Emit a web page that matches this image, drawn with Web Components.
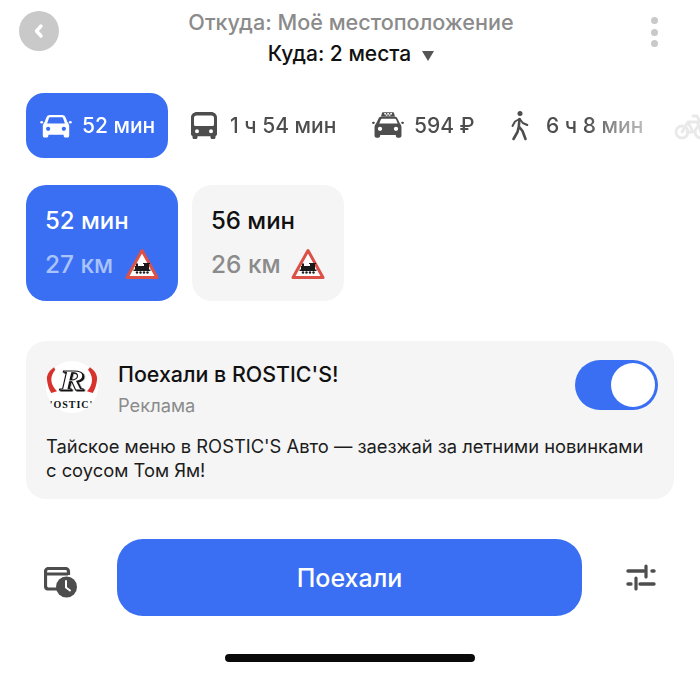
<!DOCTYPE html>
<html lang="ru">
<head>
<meta charset="utf-8">
<title>Маршрут</title>
<style>
  html, body { margin: 0; padding: 0; background: #fff; }
  body { font-family: Inter, "Noto Sans", sans-serif; }
</style>
</head>
<body>
<route-screen></route-screen>
<script>
const ICONS = {
  car: `<svg width="34" height="24" viewBox="0 0 34 26"><path fill="currentColor" fill-rule="evenodd" d="M10.500 1h13c1.800 0 3.100.9 3.800 2.500l2.200 5.500c1.200 1.300 1.800 2.700 1.800 4.300v10.200c0 1.100-.8 2-1.900 2h-2.200c-1.100 0-1.900-.9-1.900-2v-1H8.700v1c0 1.100-.8 2-1.900 2H4.600c-1.100 0-1.900-.9-1.900-2V13.300c0-1.600.6-3 1.800-4.300l2.200-5.500C7.400 1.900 8.700 1 10.500 1zm.6 2.600c-.9 0-1.600.5-1.900 1.300L7.400 10.300h19.200l-1.800-5.400c-.3-.8-1-1.300-1.900-1.300zM8.500 13.700a2.300 2.300 0 1 0 0 4.600 2.300 2.300 0 0 0 0-4.600zm17 0a2.300 2.300 0 1 0 0 4.600 2.300 2.300 0 0 0 0-4.600z"/><rect fill="currentColor" y="7.500" width="3" height="2.800" rx="1.400"/><rect fill="currentColor" x="31" y="7.500" width="3" height="2.800" rx="1.400"/></svg>`,
  bus: `<svg width="26" height="27" viewBox="0 0 26 27"><path fill="currentColor" fill-rule="evenodd" d="M6 0h14c3.400 0 6 2.400 6 5.500V22c0 1-.6 1.800-1.500 2.100V25.500c0 .8-.7 1.500-1.500 1.500h-2c-.8 0-1.500-.7-1.500-1.500V24.200H6.500v1.300c0 .8-.7 1.500-1.500 1.500H3c-.8 0-1.500-.7-1.500-1.500v-1.400C.6 23.800 0 23 0 22V5.500C0 2.400 2.600 0 6 0zM5.500 3.500C4 3.500 3 4.500 3 6v6.500c0 .8.600 1.500 1.500 1.500h17c.9 0 1.500-.7 1.500-1.500V6c0-1.500-1-2.500-2.500-2.500zM6 17.200a2 2 0 1 0 0 4 2 2 0 0 0 0-4zm14 0a2 2 0 1 0 0 4 2 2 0 0 0 0-4z"/></svg>`,
  taxi: `<svg width="32" height="27" viewBox="0 0 34 28"><path fill="currentColor" d="M11 0h12l1.500 4.500h-15z"/><path fill="#fff" d="M13 .8h1.800v1.400H13zM16.200.8H18v1.400h-1.800zM19.400.8h1.800v1.400h-1.800zM14.600 2.300h1.800v1.400h-1.800zM17.800 2.300h1.800v1.400h-1.800z"/><path fill="currentColor" fill-rule="evenodd" d="M10.500 4.500h13c1.800 0 3.100.9 3.800 2.500l2.200 4.500c1.200 1.300 1.800 2.700 1.800 4.300v9.200c0 1.100-.8 2-1.900 2h-2.200c-1.100 0-1.900-.9-1.900-2v-1H8.700v1c0 1.100-.8 2-1.900 2H4.600c-1.100 0-1.900-.9-1.900-2v-9.200c0-1.600.6-3 1.800-4.300l2.200-4.500c.7-1.600 2-2.500 3.800-2.500zm.6 2.300c-.9 0-1.600.5-1.900 1.300l-1.500 3.700h19.600l-1.500-3.700c-.3-.8-1-1.300-1.900-1.300zM8.500 15.200a2.300 2.300 0 1 0 0 4.600 2.300 2.300 0 0 0 0-4.600zm17 0a2.300 2.300 0 1 0 0 4.600 2.300 2.300 0 0 0 0-4.600z"/><rect fill="currentColor" y="10" width="3" height="2.400" rx="1.200"/><rect fill="currentColor" x="31" y="10" width="3" height="2.400" rx="1.200"/></svg>`,
  walk: `<svg width="18" height="30" viewBox="0 0 18 30"><circle fill="currentColor" cx="9" cy="2.500" r="2.500"/><path fill="none" stroke="currentColor" stroke-width="2.600" stroke-linecap="round" stroke-linejoin="round" d="M8.500 8 7.800 15.500 11.500 20 14.500 28M7.800 15.500 6.500 21 2.500 28"/><path fill="none" stroke="currentColor" stroke-width="2" stroke-linecap="round" stroke-linejoin="round" d="M8.500 8 4 10.500 1.500 15M8.800 8l3 4 4.500 2"/></svg>`,
  bike: `<svg width="34" height="28" viewBox="0 0 34 28"><g fill="none" stroke="currentColor" stroke-width="2.800" stroke-linecap="round" stroke-linejoin="round"><circle cx="8" cy="20" r="6"/><circle cx="27" cy="20" r="6"/><path d="M8 20 14 10h9l4 10M14 10l5 10h-6M19 4h4l3 6"/></g></svg>`,
  history: `<svg width="33" height="31" viewBox="0 0 33 31"><path fill="none" stroke="currentColor" stroke-width="3.200" stroke-linejoin="round" d="M14 22H4.500c-1.700 0-3-1.200-3-3V4.500c0-1.700 1.300-3 3-3h17c1.700 0 3 1.300 3 3V8M2 7h22"/><circle fill="currentColor" cx="22.500" cy="20" r="10.500"/><path fill="none" stroke="#fff" stroke-width="2" stroke-linecap="round" stroke-linejoin="round" d="M22 14v6.500l4 3"/></svg>`,
  sliders: `<svg width="30" height="27" viewBox="0 0 30 27"><g fill="none" stroke="currentColor" stroke-linecap="round"><path stroke-width="3.400" d="M2 7h16M28 7h-2M2 20h3M14 20h14"/><path stroke-width="3.200" d="M20 2v11M10 14v11"/></g></svg>`
}

// Знак "железнодорожный переезд"
const RAIL_SIGN = `<svg width="34" height="32" viewBox="0 0 34 32">
  <path fill="#fff" stroke="#dc5147" stroke-width="3" stroke-linejoin="round" d="M17 2.500 32 29.500H2z"/>
  <path fill="#1a1a1a" d="M11 15.500h2v2.500h6v-2h-1v-1h7v1h-1v5.500h1.500v1.500H8.500v-1.500H10v-3.500h1z"/>
  <circle fill="#1a1a1a" cx="12" cy="24.500" r="1.200"/><circle fill="#1a1a1a" cx="15.500" cy="24.500" r="1.200"/>
  <circle fill="#1a1a1a" cx="19" cy="24.500" r="1.200"/><circle fill="#1a1a1a" cx="22.500" cy="24.500" r="1.200"/>
</svg>`

class RouteHeader extends HTMLElement {
  constructor () {
    super()
    this.shadow = this.attachShadow({ mode: 'open' })
  }

  connectedCallback () {
    this.shadow.innerHTML =
      /* html */`
      <style>
        :host {
          display: grid;
          grid-template-columns: 66px 1fr 66px;
          height: 93px;
          padding: 0 13px 0 19px;
          box-sizing: border-box;
        }
        .back {
          width: 40px;
          height: 40px;
          margin-top: 11px;
          border-radius: 50%;
          background: #c9c9c9;
          display: flex;
          align-items: center;
          justify-content: center;
        }
        .titles {
          text-align: center;
          padding-top: 8px;
          margin-left: -4px;
        }
        .from {
          color: #8b8b8b;
          font-size: 21.600px;
          font-weight: 500;
          line-height: 28px;
          white-space: nowrap;
        }
        .to {
          color: #111;
          font-size: 21px;
          font-weight: 500;
          line-height: 28px;
          margin-top: 4px;
          display: flex;
          justify-content: center;
          align-items: center;
          gap: 11px;
        }
        .arrow {
          width: 0;
          height: 0;
          margin-top: 3px;
          border-left: 6px solid transparent;
          border-right: 6px solid transparent;
          border-top: 10px solid #555;
        }
        .dots {
          justify-self: end;
          margin: 17px 29px 0 0;
          display: flex;
          flex-direction: column;
          gap: 4.500px;
        }
        .dots i {
          width: 7px;
          height: 7px;
          border-radius: 50%;
          background: #c9c9c9;
        }
      </style>
      <div class="back">
        <svg width="14" height="16" viewBox="0 0 14 16"><path fill="none" stroke="#fff" stroke-width="3.400" stroke-linecap="round" stroke-linejoin="round" d="M9 3 4.500 8 9 13"/></svg>
      </div>
      <div class="titles">
        <div class="from">Откуда: Моё местоположение</div>
        <div class="to"><span>Куда: 2 места</span><span class="arrow"></span></div>
      </div>
      <div class="dots"><i></i><i></i><i></i></div>
      `
  }
}

class TransportTab extends HTMLElement {
  constructor () {
    super()
    this.shadow = this.attachShadow({ mode: 'open' })
  }

  connectedCallback () {
    const icon = ICONS[this.getAttribute('icon')]
    this.shadow.innerHTML =
      /* html */`
      <style>
        :host {
          display: flex;
          flex: none;
          align-items: center;
          height: 65px;
          box-sizing: border-box;
          border-radius: 18px;
          color: #4d4d4d;
          font-size: 21px;
          font-weight: 500;
          white-space: nowrap;
        }
        :host([active]) {
          background: #3a6ff3;
          color: #fff;
        }
        .icon { display: flex; }
      </style>
      <span class="icon">${icon}</span>
      <slot></slot>
      `
  }
}

class TransportTabs extends HTMLElement {
  constructor () {
    super()
    this.shadow = this.attachShadow({ mode: 'open' })
  }

  connectedCallback () {
    this.shadow.innerHTML =
      /* html */`
      <style>
        :host {
          display: flex;
          height: 65px;
          overflow: hidden;
          padding-left: 26px;
          -webkit-mask-image: linear-gradient(to right, #000 585px, rgba(0,0,0,.7) 610px, rgba(0,0,0,.4) 641px, rgba(0,0,0,.12) 675px);
          mask-image: linear-gradient(to right, #000 585px, rgba(0,0,0,.7) 610px, rgba(0,0,0,.4) 641px, rgba(0,0,0,.12) 675px);
        }
      </style>
      <slot></slot>
      `
  }
}

class RouteCard extends HTMLElement {
  constructor () {
    super()
    this.shadow = this.attachShadow({ mode: 'open' })
  }

  connectedCallback () {
    this.shadow.innerHTML =
      /* html */`
      <style>
        :host {
          display: flex;
          flex-direction: column;
          width: 152px;
          height: 116px;
          box-sizing: border-box;
          padding: 22px 0 0 19px;
          border-radius: 20px;
          background: #f5f5f5;
          color: #111;
        }
        :host([active]) {
          background: #3a6ff3;
          color: #fff;
        }
        .time {
          font-size: 24px;
          font-weight: 500;
          line-height: 27px;
          white-space: nowrap;
        }
        .bottom {
          display: flex;
          align-items: center;
          gap: 12px;
          margin-top: 13px;
          height: 34px;
        }
        .distance {
          width: 68px;
          color: #8b8b8b;
          font-size: 24.400px;
          font-weight: 500;
          white-space: nowrap;
        }
        :host([active]) .distance { color: #a9c3fb; }
        .sign { display: flex; }
      </style>
      <div class="time">${this.getAttribute('time')}</div>
      <div class="bottom">
        <span class="distance">${this.getAttribute('distance')}</span>
        <span class="sign">${RAIL_SIGN}</span>
      </div>
      `
  }
}

class AdToggle extends HTMLElement {
  constructor () {
    super()
    this.shadow = this.attachShadow({ mode: 'open' })
  }

  connectedCallback () {
    this.shadow.innerHTML =
      /* html */`
      <style>
        :host {
          display: flex;
          justify-content: flex-end;
          align-items: center;
          flex: none;
          width: 83px;
          height: 50px;
          padding: 3px;
          box-sizing: border-box;
          border-radius: 25px;
          background: #3a6ff3;
        }
        .knob {
          width: 44px;
          height: 44px;
          border-radius: 50%;
          background: #fff;
        }
      </style>
      <div class="knob"></div>
      `
  }
}

class AdCard extends HTMLElement {
  constructor () {
    super()
    this.shadow = this.attachShadow({ mode: 'open' })
  }

  connectedCallback () {
    this.shadow.innerHTML =
      /* html */`
      <style>
        :host {
          display: block;
          height: 158px;
          box-sizing: border-box;
          margin: 40px 26px 0;
          padding: 19px 16px 0 20px;
          border-radius: 20px;
          background: #f5f5f5;
        }
        .top {
          display: flex;
          align-items: flex-start;
        }
        .logo {
          flex: none;
          display: flex;
          width: 52px;
          height: 52px;
          margin-top: 1px;
        }
        .head {
          flex: 1;
          margin-left: 20px;
        }
        .title {
          color: #111;
          font-size: 21.400px;
          font-weight: 500;
          line-height: 28px;
        }
        .label {
          color: #8b8b8b;
          font-size: 18.300px;
          line-height: 24px;
          margin-top: 5px;
        }
        .body {
          color: #1c1c1c;
          font-size: 18.350px;
          line-height: 24px;
          margin-top: 17px;
          white-space: nowrap;
        }
        .mark {
          filter: drop-shadow(1.500px 1px 0 #111);
        }
      </style>
      <div class="top">
        <div class="logo">
          <svg width="52" height="52" viewBox="0 0 52 52">
            <circle cx="26" cy="26" r="26" fill="#fff"/>
            <path fill="#d8322c" d="M8 6.300C3 10 .5 14 1 18.700c.5 5 2 10 4.300 13.300l5.700-1.700C8 27 5.300 23 5.300 18.700c0-3.700 1.700-7 4-10zM44 6.300c5 3.700 7.500 7.700 7 12.400-.5 5-2 10-4.300 13.300l-5.700-1.700c3-3.300 5-7.300 5-11.600 0-3.700-1.700-7-4-10z"/>
            <text class="mark" transform="translate(26 29.200) scale(1.300 1)" text-anchor="middle" font-family="Liberation Serif" font-style="italic" font-weight="700" font-size="29" fill="#fff" stroke="#111" stroke-width=".9">R</text>
            <text x="25.500" y="47" text-anchor="middle" font-family="Liberation Serif" font-weight="700" font-size="10" letter-spacing="1" fill="#111">'OSTIC'</text>
          </svg>
        </div>
        <div class="head">
          <div class="title">Поехали в ROSTIC'S!</div>
          <div class="label">Реклама</div>
        </div>
        <ad-toggle></ad-toggle>
      </div>
      <div class="body">Тайское меню в ROSTIC'S Авто — заезжай за летними новинками<br>с соусом Том Ям!</div>
      `
  }
}

class ActionBar extends HTMLElement {
  constructor () {
    super()
    this.shadow = this.attachShadow({ mode: 'open' })
  }

  connectedCallback () {
    this.shadow.innerHTML =
      /* html */`
      <style>
        :host {
          display: grid;
          grid-template-columns: 117px 465px 118px;
          align-items: center;
          height: 77px;
          margin-top: 40px;
          color: #4d4d4d;
        }
        .side { display: flex; }
        .history { margin: 10px 0 0 44px; }
        .sliders { margin: 0 0 0 44px; }
        .go {
          display: flex;
          align-items: center;
          justify-content: center;
          height: 77px;
          border-radius: 26px;
          background: #3a6ff3;
          color: #fff;
          font-size: 25px;
          font-weight: 500;
        }
      </style>
      <div class="side history">${ICONS.history}</div>
      <div class="go">Поехали</div>
      <div class="side sliders">${ICONS.sliders}</div>
      `
  }
}

class RouteScreen extends HTMLElement {
  constructor () {
    super()
    this.shadow = this.attachShadow({ mode: 'open' })
  }

  connectedCallback () {
    this.shadow.innerHTML =
      /* html */`
      <style>
        :host {
          display: block;
          width: 700px;
          height: 675px;
          overflow: hidden;
          background: #fff;
          font-family: Inter, "Noto Sans", sans-serif;
        }
        .routes {
          display: flex;
          gap: 14px;
          padding: 27px 26px 0;
        }
        .home {
          width: 250px;
          height: 8px;
          margin: 38px auto 0;
          border-radius: 4px;
          background: #0a0a0a;
        }
        .t-car { width: 142px; padding-left: 13px; gap: 9px; box-sizing: border-box; }
        .t-bus { margin-left: 23px; gap: 13px; width: 158px; }
        .t-taxi { margin-left: 23px; gap: 10px; width: 116px; }
        .t-walk { margin-left: 23px; gap: 17px; width: 140px; }
        .t-bike { margin-left: 23px; }
      </style>
      <route-header></route-header>
      <transport-tabs>
        <transport-tab class="t-car" icon="car" active>52 мин</transport-tab>
        <transport-tab class="t-bus" icon="bus">1 ч 54 мин</transport-tab>
        <transport-tab class="t-taxi" icon="taxi">594 ₽</transport-tab>
        <transport-tab class="t-walk" icon="walk">6 ч 8 мин</transport-tab>
        <transport-tab class="t-bike" icon="bike"></transport-tab>
      </transport-tabs>
      <div class="routes">
        <route-card time="52 мин" distance="27 км" active></route-card>
        <route-card time="56 мин" distance="26 км"></route-card>
      </div>
      <ad-card></ad-card>
      <action-bar></action-bar>
      <div class="home"></div>
      `
  }
}

customElements.define('route-header', RouteHeader)
customElements.define('transport-tab', TransportTab)
customElements.define('transport-tabs', TransportTabs)
customElements.define('route-card', RouteCard)
customElements.define('ad-toggle', AdToggle)
customElements.define('ad-card', AdCard)
customElements.define('action-bar', ActionBar)
customElements.define('route-screen', RouteScreen)
</script>
</body>
</html>
